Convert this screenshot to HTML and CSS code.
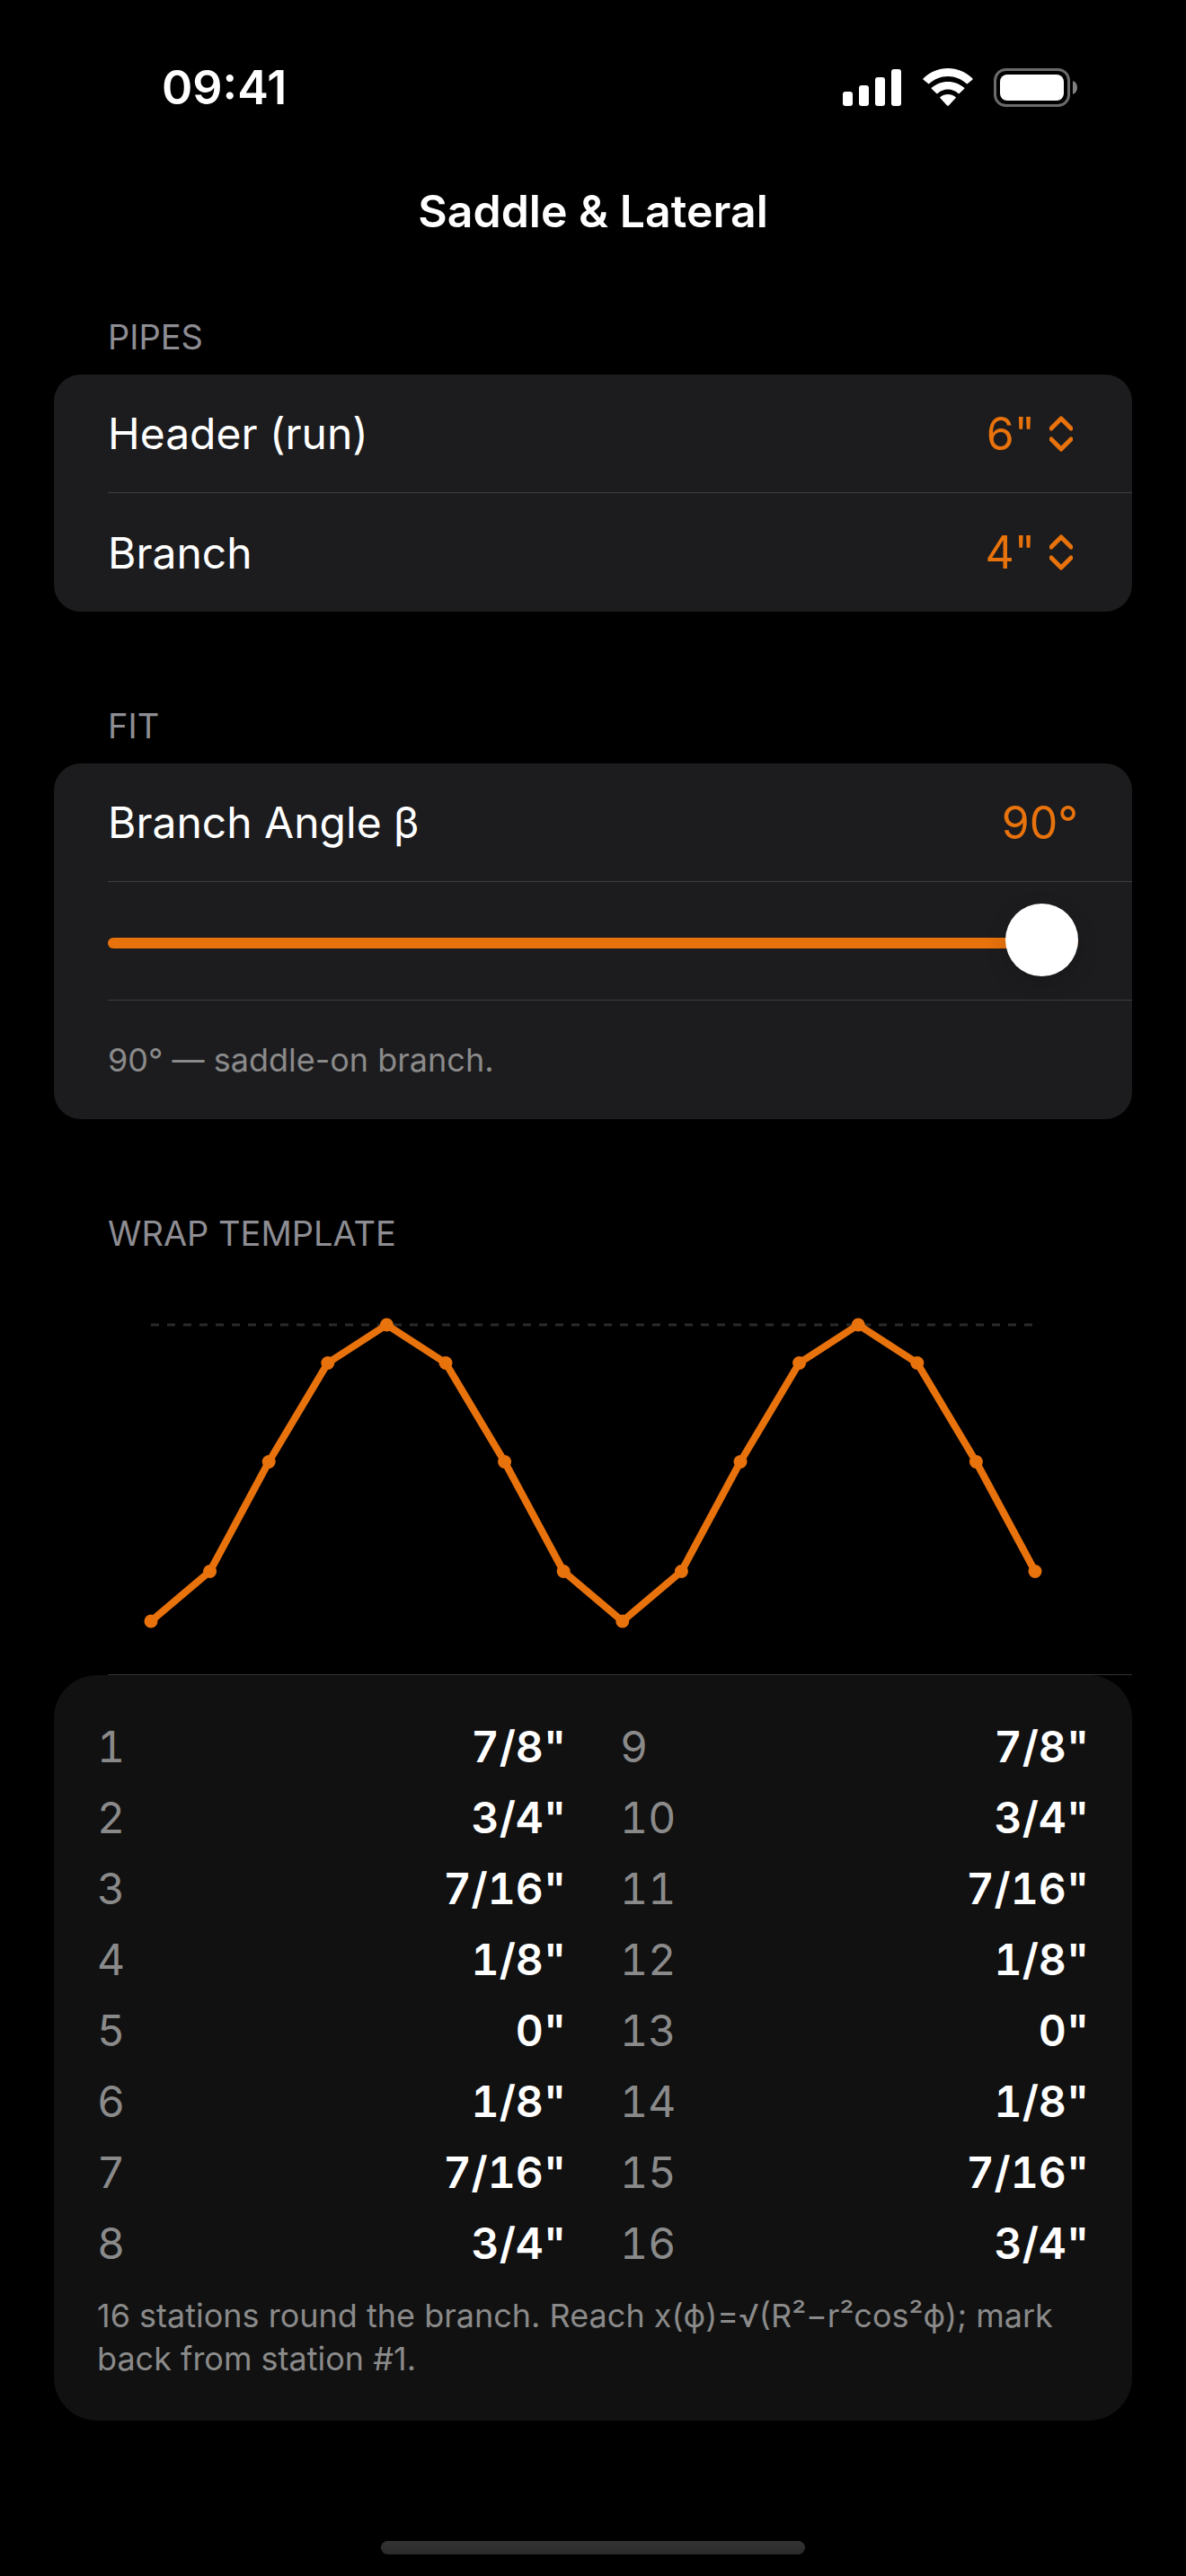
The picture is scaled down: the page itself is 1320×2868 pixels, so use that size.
FILE: index.html
```html
<!DOCTYPE html>
<html lang="en">
<head>
    <meta charset="UTF-8">
    <meta name="viewport" content="width=device-width, initial-scale=1.0">
    <title>Saddle &amp; Lateral</title>
    <link rel="stylesheet" href="styles.css">
</head>
<body>
    <div class="status-bar">
        <span class="time">09:41</span>
        <div class="status-icons">
            <svg width="66" height="44" viewBox="0 0 66 44" fill="#fff" aria-hidden="true">
                <rect x="0" y="26" width="11" height="16" rx="3"/>
                <rect x="18" y="19" width="11" height="23" rx="3"/>
                <rect x="36" y="10" width="11" height="32" rx="3"/>
                <rect x="54" y="1" width="11" height="41" rx="3"/>
            </svg>
            <svg width="58" height="44" viewBox="0 0 58 44" fill="#fff" aria-hidden="true">
                <path d="M29 9c7.900 0 15.100 3 20.600 8.100.4.400 1 .4 1.400 0l5.300-4.300c.5-.4.500-1 0-1.500C49 4.200 39.400 0 29 0S9 4.200 1.700 11.300c-.5.500-.5 1.100 0 1.500L7 17.100c.4.400 1 .4 1.400 0C13.900 12 21.100 9 29 9z"/>
                <path d="M29 23.500c4.300 0 8.300 1.600 11.400 4.400.4.400 1 .4 1.400 0l5.200-4.800c.5-.4.500-1 0-1.500-4.800-4.200-11.100-6.700-18-6.700s-13.200 2.500-18 6.700c-.5.500-.5 1.100 0 1.500l5.200 4.800c.4.400 1 .4 1.400 0 3.100-2.800 7.100-4.400 11.400-4.400z"/>
                <path d="M37.500 33.300c.5-.4.500-1 0-1.400-2.300-1.900-5.300-2.900-8.500-2.900s-6.200 1-8.500 2.900c-.5.400-.5 1 0 1.400l7.600 8.100c.5.600 1.300.6 1.800 0z"/>
            </svg>
            <svg width="94" height="44" viewBox="0 0 94 44" aria-hidden="true">
                <rect x="1.500" y="1.500" width="82" height="40" rx="12" fill="none" stroke="#6b6b6b" stroke-width="3"/>
                <rect x="7" y="7" width="71" height="29" rx="8" fill="#fff"/>
                <path d="M88 14c3.500 1.300 5 4.300 5 7.500s-1.500 6.200-5 7.500z" fill="#808080"/>
            </svg>
        </div>
    </div>

    <h1>Saddle &amp; Lateral</h1>

    <main>
        <section>
            <h2>PIPES</h2>
            <div class="card">
                <div class="row">
                    <label for="header-size">Header (run)</label>
                    <div class="picker">
                        <select id="header-size">
                            <option>4"</option>
                            <option selected>6"</option>
                            <option>8"</option>
                        </select>
                        <svg width="26" height="40" viewBox="0 0 26 40" aria-hidden="true">
                            <path d="M2 14L13 3l11 11M2 26l11 11 11-11"/>
                        </svg>
                    </div>
                </div>
                <div class="row">
                    <label for="branch-size">Branch</label>
                    <div class="picker">
                        <select id="branch-size">
                            <option>3"</option>
                            <option selected>4"</option>
                            <option>6"</option>
                        </select>
                        <svg width="26" height="40" viewBox="0 0 26 40" aria-hidden="true">
                            <path d="M2 14L13 3l11 11M2 26l11 11 11-11"/>
                        </svg>
                    </div>
                </div>
            </div>
        </section>

        <section>
            <h2>FIT</h2>
            <div class="card">
                <div class="row">
                    <label for="angle">Branch Angle β</label>
                    <output class="value" for="angle">90°</output>
                </div>
                <div class="row">
                    <input type="range" id="angle" class="slider" min="30" max="90" value="90">
                </div>
                <div class="row">
                    <p class="note">90° — saddle-on branch.</p>
                </div>
            </div>
        </section>

        <section>
            <h2>WRAP TEMPLATE</h2>
            <svg class="chart" viewBox="0 0 1200 450" role="img" aria-label="Wrap template curve">
                <line class="baseline" x1="108" y1="60" x2="1092" y2="60"/>
                <polyline class="curve" points="108,390 173.600,334.500 239.200,212.500 304.800,102.500 370.400,60 436,102.500 501.600,212.500 567.200,334.500 632.800,390 698.400,334.500 764,212.500 829.600,102.500 895.200,60 960.800,102.500 1026.400,212.500 1092,334.500"/>
                <g class="stations">
                    <circle cx="108" cy="390" r="7.500"/>
                    <circle cx="173.600" cy="334.500" r="7.500"/>
                    <circle cx="239.200" cy="212.500" r="7.500"/>
                    <circle cx="304.800" cy="102.500" r="7.500"/>
                    <circle cx="370.400" cy="60" r="7.500"/>
                    <circle cx="436" cy="102.500" r="7.500"/>
                    <circle cx="501.600" cy="212.500" r="7.500"/>
                    <circle cx="567.200" cy="334.500" r="7.500"/>
                    <circle cx="632.800" cy="390" r="7.500"/>
                    <circle cx="698.400" cy="334.500" r="7.500"/>
                    <circle cx="764" cy="212.500" r="7.500"/>
                    <circle cx="829.600" cy="102.500" r="7.500"/>
                    <circle cx="895.200" cy="60" r="7.500"/>
                    <circle cx="960.800" cy="102.500" r="7.500"/>
                    <circle cx="1026.400" cy="212.500" r="7.500"/>
                    <circle cx="1092" cy="334.500" r="7.500"/>
                </g>
                <line class="divider" x1="60" y1="449.500" x2="1200" y2="449.500"/>
            </svg>
            <div class="results">
                <div class="tables">
                    <table>
                        <tr><th scope="row">1</th><td>7/8"</td></tr>
                        <tr><th scope="row">2</th><td>3/4"</td></tr>
                        <tr><th scope="row">3</th><td>7/16"</td></tr>
                        <tr><th scope="row">4</th><td>1/8"</td></tr>
                        <tr><th scope="row">5</th><td>0"</td></tr>
                        <tr><th scope="row">6</th><td>1/8"</td></tr>
                        <tr><th scope="row">7</th><td>7/16"</td></tr>
                        <tr><th scope="row">8</th><td>3/4"</td></tr>
                    </table>
                    <table>
                        <tr><th scope="row">9</th><td>7/8"</td></tr>
                        <tr><th scope="row">10</th><td>3/4"</td></tr>
                        <tr><th scope="row">11</th><td>7/16"</td></tr>
                        <tr><th scope="row">12</th><td>1/8"</td></tr>
                        <tr><th scope="row">13</th><td>0"</td></tr>
                        <tr><th scope="row">14</th><td>1/8"</td></tr>
                        <tr><th scope="row">15</th><td>7/16"</td></tr>
                        <tr><th scope="row">16</th><td>3/4"</td></tr>
                    </table>
                </div>
                <p class="note">16 stations round the branch. Reach x(ϕ)=√(R²−r²cos²ϕ); mark back from station #1.</p>
            </div>
        </section>
    </main>

    <div class="home-indicator"></div>
</body>
</html>
```
FILE: styles.css
```css
* {
    box-sizing: border-box;
}

body {
    margin: 0;
    min-height: 100vh;
    display: flex;
    flex-direction: column;
    background: #000;
    color: #fff;
    font-family: Inter, "Liberation Sans", sans-serif;
    font-size: 48px;
}

.status-bar {
    display: flex;
    justify-content: space-between;
    align-items: center;
    padding: 66px 120px 0 180px;
    line-height: 64px;
}

.time {
    font-size: 52px;
    font-weight: 600;
}

.status-icons {
    display: flex;
    align-items: center;
    gap: 22px;
}

h1 {
    margin: 70px 0 81px;
    font-size: 50px;
    font-weight: 600;
    line-height: 70px;
    text-align: center;
}

main {
    display: flex;
    flex-direction: column;
    gap: 103px;
    padding: 0 60px;
}

h2 {
    margin: 0 0 18px;
    padding-left: 60px;
    color: #8d8d93;
    font-size: 38px;
    font-weight: 400;
    line-height: 48px;
}

.card {
    padding-left: 60px;
    border-radius: 30px;
    background: #1c1c1e;
}

.row {
    display: flex;
    justify-content: space-between;
    align-items: center;
    height: 132px;
    padding-right: 60px;
    border-bottom: 1px solid #3d3d41;
}

.row:last-child {
    border-bottom: none;
}

.value,
.picker {
    color: #e8720c;
    font-size: 50px;
}

.picker {
    position: relative;
}

.picker select {
    appearance: none;
    margin: 0;
    padding: 0 48px 0 0;
    border: none;
    background: none;
    color: inherit;
    font: inherit;
    text-align-last: right;
}

.picker svg {
    position: absolute;
    top: 50%;
    right: 6px;
    margin-top: -20px;
    fill: none;
    stroke: currentColor;
    stroke-width: 5;
    stroke-linecap: round;
    stroke-linejoin: round;
    pointer-events: none;
}

.slider {
    appearance: none;
    flex: 1;
    height: 81px;
    margin: 0;
    padding-top: 4px;
    background: none;
}

.slider::-webkit-slider-runnable-track {
    height: 12px;
    border-radius: 6px;
    background: #e8720c;
}

.slider::-webkit-slider-thumb {
    appearance: none;
    width: 81px;
    height: 81px;
    margin-top: -38px;
    border-radius: 50%;
    background: #fff;
    box-shadow: 0 8px 24px rgba(0, 0, 0, 0.15);
}

.note {
    margin: 0;
    color: #8a8a8a;
    font-size: 36px;
    line-height: 48px;
}

.chart {
    display: block;
    width: 100%;
}

.baseline {
    stroke: #2a2a2a;
    stroke-width: 3;
    stroke-dasharray: 9 9;
}

.curve {
    fill: none;
    stroke: #e8720c;
    stroke-width: 8;
    stroke-linejoin: round;
}

.stations {
    fill: #e8720c;
}

.divider {
    stroke: #333;
}

.results {
    padding: 40px 48px 45px;
    border-radius: 48px;
    background: #111;
}

.tables {
    display: grid;
    grid-template-columns: 1fr 1fr;
    gap: 60px;
    margin-bottom: 17px;
}

table {
    border-collapse: collapse;
    font-variant-numeric: tabular-nums;
    line-height: 79px;
}

th,
td {
    padding: 0;
}

th {
    color: #8a8a8a;
    font-weight: 400;
    text-align: left;
}

td {
    font-weight: 600;
    text-align: right;
}

.home-indicator {
    width: 472px;
    max-width: 60%;
    height: 15px;
    margin: auto auto 24px;
    border-radius: 8px;
    background: linear-gradient(#343434, #2a2a2a);
}
```
